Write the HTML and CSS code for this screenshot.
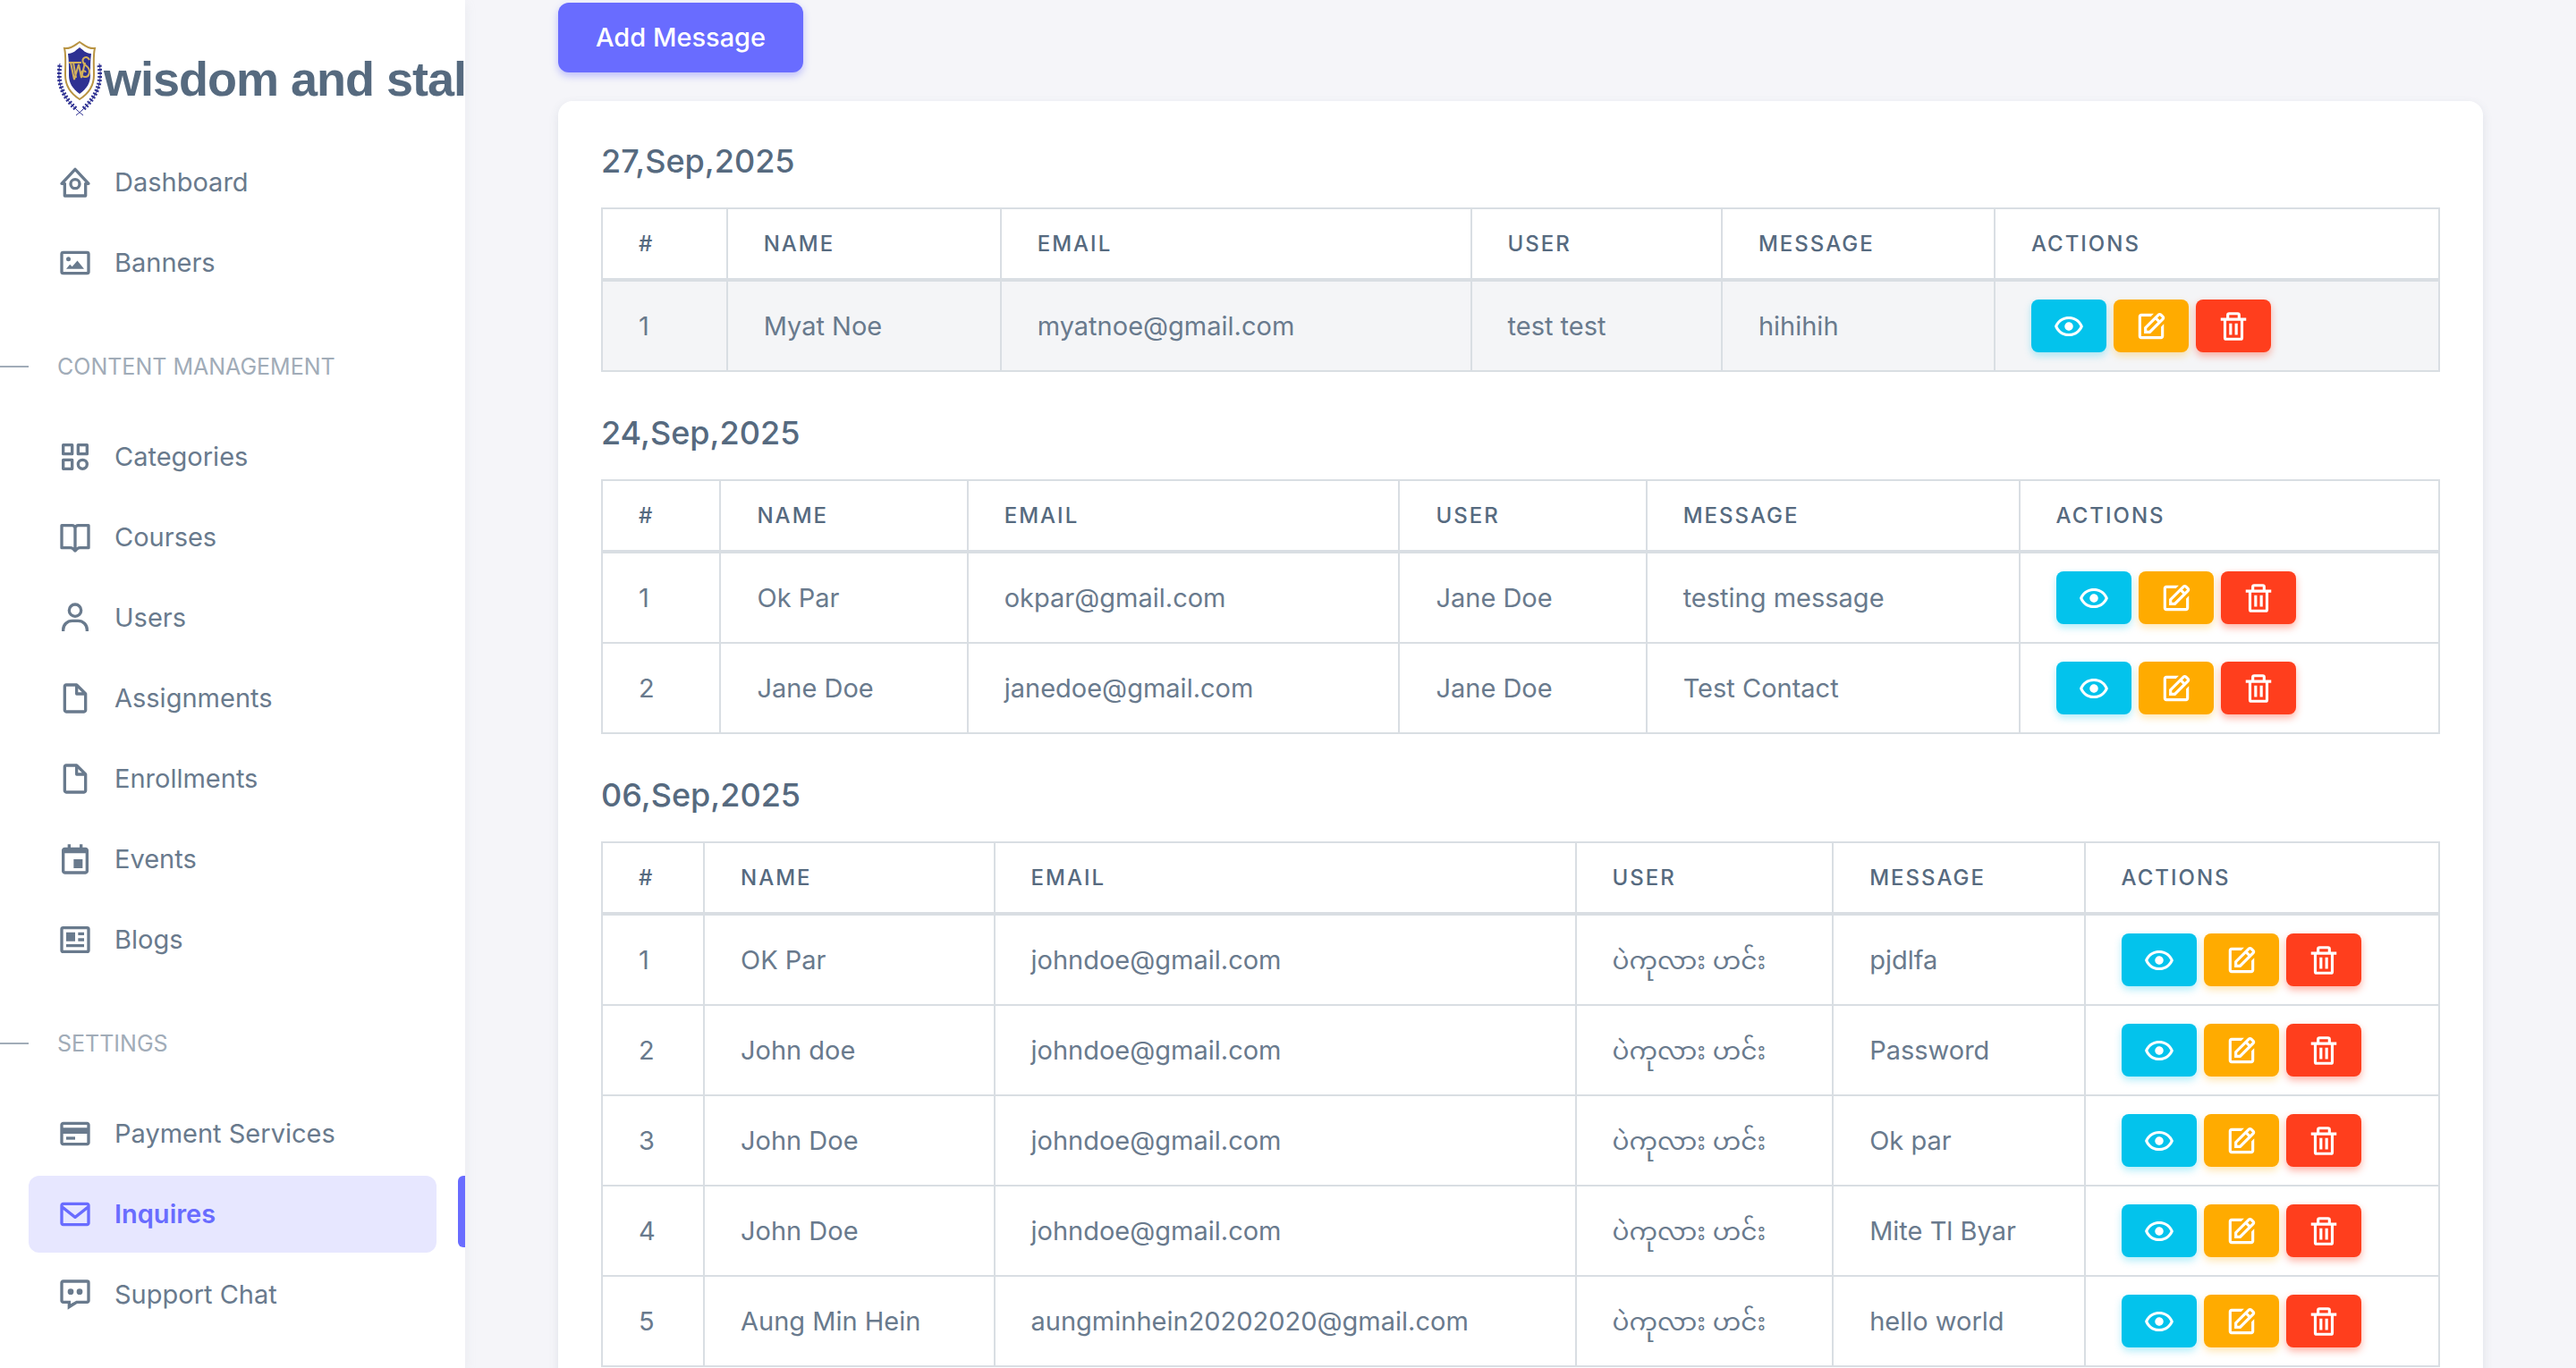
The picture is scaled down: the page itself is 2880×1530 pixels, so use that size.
FILE: index.html
```html
<!DOCTYPE html>
<html lang="en">
<head>
<meta charset="utf-8">
<title>Inquires</title>
<link rel="stylesheet" href="styles.css">
</head>
<body>
<svg class="sprite" aria-hidden="true">
  <symbol id="i-home" viewBox="0 0 24 24"><path d="M12 3.2 3 12.8h2V21h14v-8.200h2z" fill="none" stroke="currentColor" stroke-width="2" stroke-linejoin="round"/><circle cx="12" cy="13" r="3" fill="none" stroke="currentColor" stroke-width="2"/></symbol>
  <symbol id="i-image" viewBox="0 0 24 24"><rect x="3" y="5" width="18" height="14" rx="1" fill="none" stroke="currentColor" stroke-width="2"/><circle cx="7.500" cy="9.500" r="1.500"/><path d="m6 16 2.500-3 1.500 1.500 3.500-4L18 16z"/></symbol>
  <symbol id="i-category" viewBox="0 0 24 24"><g fill="none" stroke="currentColor" stroke-width="2" stroke-linejoin="round"><path d="M4 4h6v6H4zM14 4h6v6h-6zM4 14h6v6H4z"/><circle cx="17" cy="17" r="3"/></g></symbol>
  <symbol id="i-book" viewBox="0 0 24 24"><path d="M21 3h-7a2.980 2.980 0 0 0-2 .78A2.980 2.980 0 0 0 10 3H3a1 1 0 0 0-1 1v15a1 1 0 0 0 1 1h5.758a2.010 2.010 0 0 1 1.414.586l1.121 1.121c.2.200.45.300.707.300s.507-.1.707-.3l1.121-1.121A2.010 2.010 0 0 1 15.242 20H21a1 1 0 0 0 1-1V4a1 1 0 0 0-1-1zM8.758 18H4V5h6c.552 0 1 .449 1 1v12.689A4.032 4.032 0 0 0 8.758 18zM20 18h-4.758c-.799 0-1.584.246-2.242.689V6c0-.551.448-1 1-1h6v13z"/></symbol>
  <symbol id="i-user" viewBox="0 0 24 24"><path d="M12 2a5 5 0 1 0 5 5 5 5 0 0 0-5-5zm0 8a3 3 0 1 1 3-3 3 3 0 0 1-3 3zm9 11v-1a7 7 0 0 0-7-7h-4a7 7 0 0 0-7 7v1h2v-1a5 5 0 0 1 5-5h4a5 5 0 0 1 5 5v1z"/></symbol>
  <symbol id="i-file" viewBox="0 0 24 24"><path d="M19.937 8.680c-.011-.032-.02-.063-.033-.094a.997.997 0 0 0-.196-.293l-6-6a.997.997 0 0 0-.293-.196c-.03-.014-.062-.022-.094-.033a.991.991 0 0 0-.259-.051C13.040 2.011 13.021 2 13 2H6c-1.103 0-2 .897-2 2v16c0 1.103.897 2 2 2h12c1.103 0 2-.897 2-2V9c0-.021-.011-.04-.013-.062a.99.99 0 0 0-.05-.258zM16.586 8H14V5.414L16.586 8zM6 20V4h6v5a1 1 0 0 0 1 1h5l.002 10H6z"/></symbol>
  <symbol id="i-calendar" viewBox="0 0 24 24"><path d="M19 4h-2V2h-2v2H9V2H7v2H5c-1.103 0-2 .897-2 2v14c0 1.103.897 2 2 2h14c1.103 0 2-.897 2-2V6c0-1.103-.897-2-2-2zm.002 16H5V8h14l.002 12z"/><path d="M11 12h6v6h-6z"/></symbol>
  <symbol id="i-news" viewBox="0 0 24 24"><rect x="3" y="4" width="18" height="16" rx="1" fill="none" stroke="currentColor" stroke-width="2"/><path d="M6 7h6v6H6zM6 15h12v2H6zM14 11h4v2h-4zM14 7h4v2h-4z"/></symbol>
  <symbol id="i-card" viewBox="0 0 24 24"><path d="M20 4H4c-1.103 0-2 .897-2 2v12c0 1.103.897 2 2 2h16c1.103 0 2-.897 2-2V6c0-1.103-.897-2-2-2zM4 6h16v2H4V6zm0 12v-6h16.001l.001 6H4z"/><path d="M6 14h6v2H6z"/></symbol>
  <symbol id="i-mail" viewBox="0 0 24 24"><path d="M20 4H4c-1.103 0-2 .897-2 2v12c0 1.103.897 2 2 2h16c1.103 0 2-.897 2-2V6c0-1.103-.897-2-2-2zm0 2v.511l-8 6.223-8-6.222V6h16zM4 18V9.044l7.386 5.745a.994.994 0 0 0 1.228 0L20 9.044 20.002 18H4z"/></symbol>
  <symbol id="i-chat" viewBox="0 0 24 24"><path d="M20 2H4c-1.103 0-2 .894-2 1.992v12.016C2 17.106 2.897 18 4 18h3v4l6.351-4H20c1.103 0 2-.894 2-1.992V3.992A1.998 1.998 0 0 0 20 2zm0 14h-7.200L9 18.200V16H4V4h16v12z"/><circle cx="9" cy="10" r="2"/><circle cx="15" cy="10" r="2"/></symbol>
  <symbol id="i-show" viewBox="0 0 24 24"><path d="M12 9a3.020 3.020 0 0 0-3 3c0 1.642 1.358 3 3 3 1.641 0 3-1.358 3-3 0-1.641-1.359-3-3-3z"/><path d="M12 5c-7.633 0-9.927 6.617-9.948 6.684L1.946 12l.105.316C2.073 12.383 4.367 19 12 19s9.927-6.617 9.948-6.684l.106-.316-.105-.316C21.927 11.617 19.633 5 12 5zm0 12c-5.351 0-7.424-3.846-7.926-5C4.578 10.842 6.652 7 12 7c5.351 0 7.424 3.846 7.926 5-.504 1.158-2.578 5-7.926 5z"/></symbol>
  <symbol id="i-edit" viewBox="0 0 24 24"><path d="m7 17.013 4.413-.015 9.632-9.540c.378-.378.586-.88.586-1.414s-.208-1.036-.586-1.414l-1.586-1.586c-.756-.756-2.075-.752-2.825-.003L7 12.583v4.430zM18.045 4.458l1.589 1.583-1.597 1.582-1.586-1.585 1.594-1.580zM9 13.417l6.030-5.973 1.586 1.586-6.029 5.971L9 15.006v-1.589z"/><path d="M5 21h14c1.103 0 2-.897 2-2v-8.668l-2 2V19H5V5h6.847l2-2H5c-1.103 0-2 .897-2 2v14c0 1.103.897 2 2 2z"/></symbol>
  <symbol id="i-trash" viewBox="0 0 24 24"><path d="M5 20a2 2 0 0 0 2 2h10a2 2 0 0 0 2-2V8h2V6h-4V4a2 2 0 0 0-2-2H9a2 2 0 0 0-2 2v2H3v2h2zM9 4h6v2H9zM8 8h9v12H7V8z"/><path d="M9 10h2v8H9zm4 0h2v8h-2z"/></symbol>
</svg>

<div class="layout">
  <aside class="sidebar">
    <a class="brand" href="#">
      <svg class="brand-logo" viewBox="0 0 50 84" aria-hidden="true">
        <path d="M25 1c5 3 9 8 17 7-2 8-1 18-1 30 0 12-5 20-16 27C14 58 9 50 9 38 9 26 10 16 8 8c8 1 12-4 17-7z" fill="#fff" stroke="#b99443" stroke-width="2"/>
        <path d="M25 7c4 3 7 7 13 7-1 7-1 15-1 24 0 9-4 15-12 21-8-6-12-12-12-21 0-9 0-17-1-24 6 0 9-4 13-7z" fill="#2e3192"/>
        <g fill="none" stroke="#d3b15c">
          <path d="M15 24l4 19 5-17 3 15 4-17M18 24l3 17M13 24h14" stroke-width="2"/>
          <path d="M36 21c-3-6-9-2-7 3 2 4 8 5 7 11-1 7-9 6-9 1 0-3 4-4 5-1" stroke-width="2"/>
        </g>
        <g fill="none" stroke="#2e3192">
          <path d="M3 25C-1 47 5 64 29 83M47 25c4 22-2 39-26 58" stroke-width="1"/>
          <path d="M3 27C0 46 5 61 22 77M47 27c3 19-2 34-19 50" stroke-width="5" stroke-dasharray="2 2"/>
        </g>
      </svg>
      <span class="brand-text">wisdom and stallion</span>
    </a>
    <nav class="menu">
      <a class="menu-link" href="#"><svg class="menu-icon"><use href="#i-home"/></svg>Dashboard</a>
      <a class="menu-link" href="#"><svg class="menu-icon"><use href="#i-image"/></svg>Banners</a>
      <h2 class="menu-header">CONTENT MANAGEMENT</h2>
      <a class="menu-link" href="#"><svg class="menu-icon"><use href="#i-category"/></svg>Categories</a>
      <a class="menu-link" href="#"><svg class="menu-icon"><use href="#i-book"/></svg>Courses</a>
      <a class="menu-link" href="#"><svg class="menu-icon"><use href="#i-user"/></svg>Users</a>
      <a class="menu-link" href="#"><svg class="menu-icon"><use href="#i-file"/></svg>Assignments</a>
      <a class="menu-link" href="#"><svg class="menu-icon"><use href="#i-file"/></svg>Enrollments</a>
      <a class="menu-link" href="#"><svg class="menu-icon"><use href="#i-calendar"/></svg>Events</a>
      <a class="menu-link" href="#"><svg class="menu-icon"><use href="#i-news"/></svg>Blogs</a>
      <h2 class="menu-header">SETTINGS</h2>
      <a class="menu-link" href="#"><svg class="menu-icon"><use href="#i-card"/></svg>Payment Services</a>
      <a class="menu-link active" href="#" aria-current="page"><svg class="menu-icon"><use href="#i-mail"/></svg>Inquires</a>
      <a class="menu-link" href="#"><svg class="menu-icon"><use href="#i-chat"/></svg>Support Chat</a>
    </nav>
  </aside>

  <main class="content">
    <button class="btn-primary" type="button">Add Message</button>
    <div class="card">
      <h5 class="date">27,Sep,2025</h5>
      <table class="table t-first">
        <colgroup><col class="c-id"><col class="c-name"><col class="c-email"><col class="c-user"><col class="c-message"><col></colgroup>
        <thead><tr><th>#</th><th>NAME</th><th>EMAIL</th><th>USER</th><th>MESSAGE</th><th>ACTIONS</th></tr></thead>
        <tbody>
          <tr class="hover"><td>1</td><td>Myat Noe</td><td>myatnoe@gmail.com</td><td>test test</td><td>hihihih</td><td><div class="actions"><button class="btn view" type="button" aria-label="View"><svg><use href="#i-show"/></svg></button><button class="btn edit" type="button" aria-label="Edit"><svg><use href="#i-edit"/></svg></button><button class="btn delete" type="button" aria-label="Delete"><svg><use href="#i-trash"/></svg></button></div></td></tr>
        </tbody>
      </table>

      <h5 class="date">24,Sep,2025</h5>
      <table class="table t-second">
        <colgroup><col class="c-id"><col class="c-name"><col class="c-email"><col class="c-user"><col class="c-message"><col></colgroup>
        <thead><tr><th>#</th><th>NAME</th><th>EMAIL</th><th>USER</th><th>MESSAGE</th><th>ACTIONS</th></tr></thead>
        <tbody>
          <tr><td>1</td><td>Ok Par</td><td>okpar@gmail.com</td><td>Jane Doe</td><td>testing message</td><td><div class="actions"><button class="btn view" type="button" aria-label="View"><svg><use href="#i-show"/></svg></button><button class="btn edit" type="button" aria-label="Edit"><svg><use href="#i-edit"/></svg></button><button class="btn delete" type="button" aria-label="Delete"><svg><use href="#i-trash"/></svg></button></div></td></tr>
          <tr><td>2</td><td>Jane Doe</td><td>janedoe@gmail.com</td><td>Jane Doe</td><td>Test Contact</td><td><div class="actions"><button class="btn view" type="button" aria-label="View"><svg><use href="#i-show"/></svg></button><button class="btn edit" type="button" aria-label="Edit"><svg><use href="#i-edit"/></svg></button><button class="btn delete" type="button" aria-label="Delete"><svg><use href="#i-trash"/></svg></button></div></td></tr>
        </tbody>
      </table>

      <h5 class="date">06,Sep,2025</h5>
      <table class="table t-third">
        <colgroup><col class="c-id"><col class="c-name"><col class="c-email"><col class="c-user"><col class="c-message"><col></colgroup>
        <thead><tr><th>#</th><th>NAME</th><th>EMAIL</th><th>USER</th><th>MESSAGE</th><th>ACTIONS</th></tr></thead>
        <tbody>
          <tr><td>1</td><td>OK Par</td><td>johndoe@gmail.com</td><td lang="my">ပဲကုလား ဟင်း</td><td>pjdlfa</td><td><div class="actions"><button class="btn view" type="button" aria-label="View"><svg><use href="#i-show"/></svg></button><button class="btn edit" type="button" aria-label="Edit"><svg><use href="#i-edit"/></svg></button><button class="btn delete" type="button" aria-label="Delete"><svg><use href="#i-trash"/></svg></button></div></td></tr>
          <tr><td>2</td><td>John doe</td><td>johndoe@gmail.com</td><td lang="my">ပဲကုလား ဟင်း</td><td>Password</td><td><div class="actions"><button class="btn view" type="button" aria-label="View"><svg><use href="#i-show"/></svg></button><button class="btn edit" type="button" aria-label="Edit"><svg><use href="#i-edit"/></svg></button><button class="btn delete" type="button" aria-label="Delete"><svg><use href="#i-trash"/></svg></button></div></td></tr>
          <tr><td>3</td><td>John Doe</td><td>johndoe@gmail.com</td><td lang="my">ပဲကုလား ဟင်း</td><td>Ok par</td><td><div class="actions"><button class="btn view" type="button" aria-label="View"><svg><use href="#i-show"/></svg></button><button class="btn edit" type="button" aria-label="Edit"><svg><use href="#i-edit"/></svg></button><button class="btn delete" type="button" aria-label="Delete"><svg><use href="#i-trash"/></svg></button></div></td></tr>
          <tr><td>4</td><td>John Doe</td><td>johndoe@gmail.com</td><td lang="my">ပဲကုလား ဟင်း</td><td>Mite Tl Byar</td><td><div class="actions"><button class="btn view" type="button" aria-label="View"><svg><use href="#i-show"/></svg></button><button class="btn edit" type="button" aria-label="Edit"><svg><use href="#i-edit"/></svg></button><button class="btn delete" type="button" aria-label="Delete"><svg><use href="#i-trash"/></svg></button></div></td></tr>
          <tr><td>5</td><td>Aung Min Hein</td><td>aungminhein20202020@gmail.com</td><td lang="my">ပဲကုလား ဟင်း</td><td>hello world</td><td><div class="actions"><button class="btn view" type="button" aria-label="View"><svg><use href="#i-show"/></svg></button><button class="btn edit" type="button" aria-label="Edit"><svg><use href="#i-edit"/></svg></button><button class="btn delete" type="button" aria-label="Delete"><svg><use href="#i-trash"/></svg></button></div></td></tr>
        </tbody>
      </table>
    </div>
  </main>
</div>
</body>
</html>
```
FILE: styles.css
```css
* {
  box-sizing: border-box;
}

body {
  margin: 0;
  background: #f5f5f9;
  color: #697a8d;
  font-family: Inter, "Noto Sans Myanmar", sans-serif;
  font-size: 29px;
  line-height: 46px;
}

button {
  font: inherit;
  border: 0;
  cursor: pointer;
}

a {
  color: inherit;
  text-decoration: none;
}

svg {
  fill: currentColor;
}

.sprite {
  display: none;
}

.layout {
  display: flex;
  height: 100vh;
  overflow: hidden;
}

/* Sidebar */
.sidebar {
  flex: 0 0 520px;
  overflow: hidden;
  background: #fff;
  box-shadow: 0 4px 12px rgba(161, 172, 184, 0.15);
}

.brand {
  display: flex;
  align-items: center;
  gap: 2px;
  padding: 46px 0 31px 64px;
}

.brand-logo {
  flex: none;
  width: 50px;
  height: 84px;
}

.brand-text {
  color: #566a7f;
  font-family: "Liberation Sans", sans-serif;
  font-size: 54px;
  font-weight: 700;
  letter-spacing: -1px;
  line-height: 84px;
  white-space: nowrap;
}

.menu {
  display: flex;
  flex-direction: column;
  gap: 4px;
}

.menu-link {
  position: relative;
  display: flex;
  align-items: center;
  gap: 24px;
  margin: 0 32px;
  padding: 20px 32px;
  border-radius: 12px;
}

.menu-icon {
  flex: none;
  width: 40px;
  height: 40px;
}

.menu-link.active {
  background: #e7e7ff;
  color: #696cff;
  font-weight: 600;
}

.menu-link.active::after {
  content: "";
  position: absolute;
  top: 0;
  right: -32px;
  width: 8px;
  height: 80px;
  border-radius: 6px 0 0 6px;
  background: #696cff;
}

.menu-header {
  display: flex;
  align-items: center;
  gap: 32px;
  margin: 51px 0 36px;
  color: #a1acb8;
  font-size: 25px;
  font-weight: 400;
  line-height: 36px;
}

.menu-header::before {
  content: "";
  width: 32px;
  height: 2px;
  background: #a1acb8;
}

/* Content */
.content {
  flex: 1;
  min-width: 0;
  padding: 3px 104px 48px;
}

.btn-primary {
  display: block;
  margin-bottom: 32px;
  padding: 16px 42px;
  border-radius: 12px;
  background: #696cff;
  box-shadow: 0 4px 8px rgba(105, 108, 255, 0.4);
  color: #fff;
  font-weight: 500;
}

.card {
  padding: 48px;
  border-radius: 16px;
  background: #fff;
  box-shadow: 0 4px 12px rgba(67, 89, 113, 0.12);
}

.date {
  margin: 0 0 32px;
  color: #566a7f;
  font-size: 36px;
  font-weight: 500;
  line-height: 39px;
}

.table {
  width: 100%;
  margin-bottom: 49px;
  border-collapse: collapse;
  table-layout: fixed;
}

.table th,
.table td {
  padding: 20px 40px;
  border: 2px solid #d9dee3;
  text-align: left;
  white-space: nowrap;
}

.table th {
  color: #566a7f;
  font-size: 24px;
  font-weight: 500;
  letter-spacing: 2px;
  line-height: 37px;
}

.table td {
  padding-block: 0;
}

.table td:lang(my) {
  font-size: 28px;
}

.table tbody {
  border-top: 4px solid #d9dee3;
}

.table .hover {
  background: #f4f5f7;
}

.t-first .c-id { width: 6.8%; }
.t-first .c-name { width: 14.9%; }
.t-first .c-email { width: 25.6%; }
.t-first .c-user { width: 13.65%; }
.t-first .c-message { width: 14.85%; }

.t-second .c-id { width: 6.45%; }
.t-second .c-name { width: 13.45%; }
.t-second .c-email { width: 23.5%; }
.t-second .c-user { width: 13.45%; }
.t-second .c-message { width: 20.3%; }

.t-third .c-id { width: 5.55%; }
.t-third .c-name { width: 15.8%; }
.t-third .c-email { width: 31.65%; }
.t-third .c-user { width: 14%; }
.t-third .c-message { width: 13.7%; }

.actions {
  display: flex;
  gap: 8px;
  padding: 20px 0;
}

.btn {
  display: flex;
  align-items: center;
  justify-content: center;
  width: 84px;
  height: 59px;
  padding: 0;
  border-radius: 8px;
  color: #fff;
}

.btn svg {
  width: 38px;
  height: 38px;
}

.view {
  background: #03c3ec;
  box-shadow: 0 4px 8px rgba(3, 195, 236, 0.3);
}

.edit {
  background: #ffab00;
  box-shadow: 0 4px 8px rgba(255, 171, 0, 0.3);
}

.delete {
  background: #ff3e1d;
  box-shadow: 0 4px 8px rgba(255, 62, 29, 0.4);
}
```
